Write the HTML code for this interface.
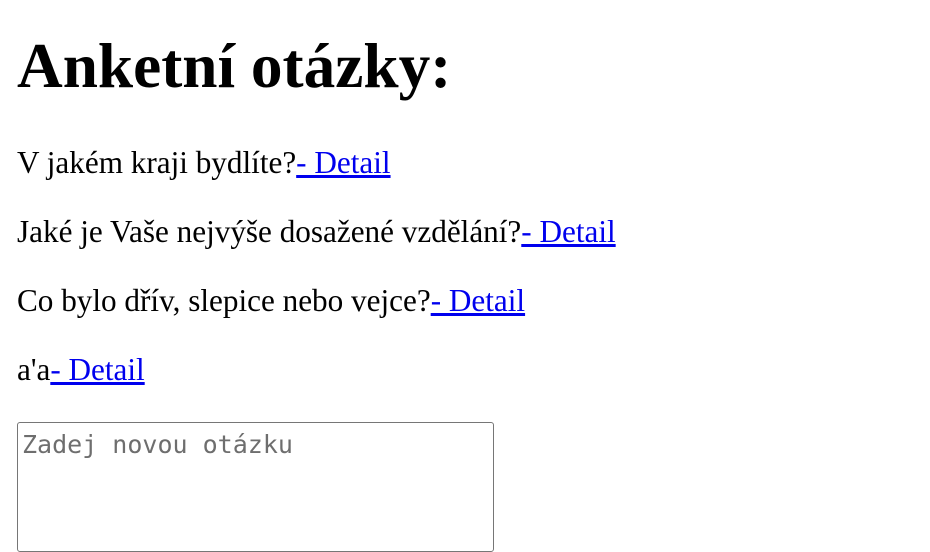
<!DOCTYPE html>
<html><head><meta charset="utf-8"><style>
body{margin:0;width:930px;height:523px;overflow:hidden;background:#fff;font-family:"Liberation Serif",serif;color:#000;position:relative}
h1,p{margin:0;position:absolute;left:17px;line-height:1;white-space:nowrap}
h1{font-size:63.3px;top:35px;font-weight:bold;left:17px}
p{font-size:31.2px}
a{color:#0000ee;text-decoration:underline}
textarea{position:absolute;left:17px;top:422px;width:477px;height:130px;box-sizing:border-box;border:1px solid #767676;border-radius:3px;padding:7px 4px;font-family:"DejaVu Sans Mono","Liberation Mono",monospace;font-size:25px;resize:none;margin:0}
textarea::placeholder{color:#6e6e6e}
</style></head><body>
<h1>Anketní otázky:</h1>
<p style="top:147px">V jakém kraji bydlíte?<a>- Detail</a></p>
<p style="top:216px">Jaké je Vaše nejvýše dosažené vzdělání?<a>- Detail</a></p>
<p style="top:285px">Co bylo dřív, slepice nebo vejce?<a>- Detail</a></p>
<p style="top:354px">a'a<a>- Detail</a></p>
<textarea placeholder="Zadej novou otázku"></textarea>
</body></html>
